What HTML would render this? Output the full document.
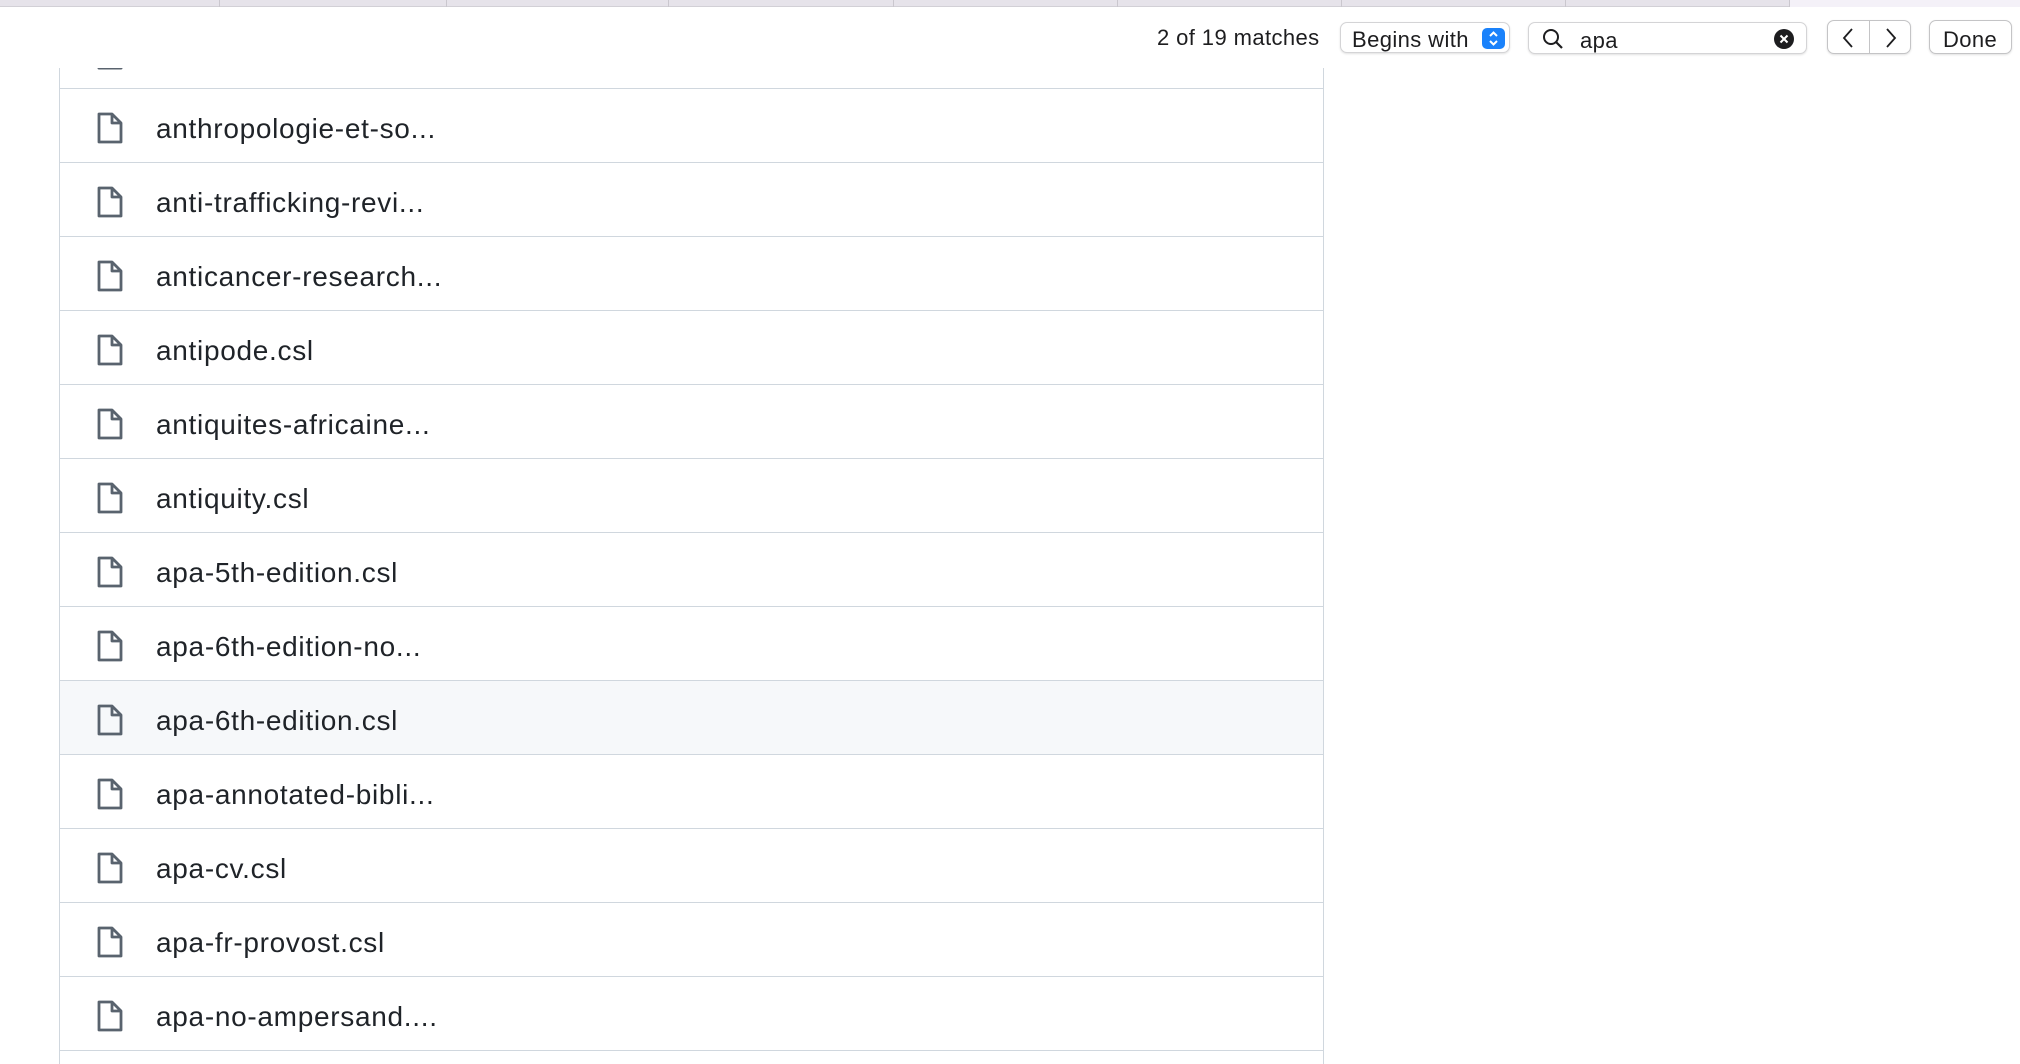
<!DOCTYPE html>
<html><head><style>
*{margin:0;padding:0;box-sizing:border-box}
body{width:2020px;height:1064px;overflow:hidden;background:#fff;font-family:"Liberation Sans",Helvetica,Arial,sans-serif;position:relative}
.tabs{position:absolute;left:0;top:0;width:2020px;height:7px;background:#e6e3ea;border-bottom:1px solid #d2d0d6}
.tabs i{position:absolute;top:0;width:1px;height:7px;background:#cac7ce}
.hdr{position:absolute;left:0;top:7px;width:2020px;height:61px;background:#fff;z-index:5}
.list{position:absolute;left:59px;top:0;width:1265px;height:1064px;border-left:1px solid #d0d7de;border-right:1px solid #d0d7de}
.row{position:absolute;left:0;width:1263px;height:74px;border-bottom:1.5px solid #d0d7de}
.row.sel{background:#f6f8fa}
.row svg{position:absolute;left:34px;top:21px}
.row span{position:absolute;left:96px;top:3px;line-height:74px;font-size:28px;letter-spacing:0.7px;color:#1f2328}
.t{position:absolute;font-size:22px;letter-spacing:0.4px;color:#1d1d1f}
.box{position:absolute;background:#fff;border:1px solid #d4d4d6;border-radius:7px;box-shadow:0 1px 2px rgba(0,0,0,.12)}
</style></head><body>
<div class="list">
<div class="row" style="top:15px"><svg width="32" height="36" viewBox="0 0 32 36"><path d="M5 4h13l9 9v19H5z" fill="none" stroke="#59636e" stroke-width="3" stroke-linejoin="round"/></svg></div>
</div>
<div class="tabs"><i style="left:219px"></i><i style="left:446px"></i><i style="left:668px"></i><i style="left:893px"></i><i style="left:1117px"></i><i style="left:1341px"></i><i style="left:1565px"></i><i style="left:1789px;width:231px;background:#f4f1f8;border-left:1px solid #cac7ce"></i></div>
<div class="hdr">
<div class="t" style="left:1157px;top:18px">2 of 19 matches</div>
<div class="box" style="left:1340px;top:15px;width:170px;height:31px"><span class="t" style="left:11px;top:4px">Begins with</span>
<div style="position:absolute;left:141px;top:5px;width:23px;height:21px;background:#1a82fb;border-radius:5px"><svg width="23" height="21" viewBox="0 0 23 21"><path d="M8 8l3.5-3.5L15 8M8 13l3.5 3.5L15 13" fill="none" stroke="#fff" stroke-width="2"/></svg></div></div>
<div class="box" style="left:1528px;top:15px;width:279px;height:32px">
<svg style="position:absolute;left:13px;top:5px" width="22" height="22" viewBox="0 0 22 22"><circle cx="9" cy="9" r="7" fill="none" stroke="#1d1d1f" stroke-width="2"/><path d="M14 14l6 6" stroke="#1d1d1f" stroke-width="2.2"/></svg>
<span class="t" style="left:51px;top:5px">apa</span>
<svg style="position:absolute;left:245px;top:6px" width="20" height="20" viewBox="0 0 20 20"><circle cx="10" cy="10" r="10" fill="#1d1d1f"/><path d="M6.5 6.5l7 7M13.5 6.5l-7 7" stroke="#fff" stroke-width="2"/></svg></div>
<div class="box" style="left:1827px;top:13px;width:84px;height:34px;border-color:#c4c4c6">
<div style="position:absolute;left:41px;top:0;width:1px;height:32px;background:#c4c4c6"></div>
<svg style="position:absolute;left:13px;top:6px" width="14" height="22" viewBox="0 0 14 22"><path d="M11 2L3 11l8 9" fill="none" stroke="#1d1d1f" stroke-width="1.8"/></svg>
<svg style="position:absolute;left:56px;top:6px" width="14" height="22" viewBox="0 0 14 22"><path d="M3 2l8 9-8 9" fill="none" stroke="#1d1d1f" stroke-width="1.8"/></svg></div>
<div class="box" style="left:1929px;top:13px;width:83px;height:34px;border-color:#c4c4c6"><span class="t" style="left:13px;top:6px">Done</span></div>
</div>
<div class="list" style="background:transparent;border:none;left:60px;width:1263px">
<div class="row" style="top:89px"><svg width="32" height="36" viewBox="0 0 32 36"><path d="M5 4h13l9 9v19H5zM18 4v9h9" fill="none" stroke="#59636e" stroke-width="2.8" stroke-linejoin="round"/></svg><span>anthropologie-et-so...</span></div>
<div class="row" style="top:163px"><svg width="32" height="36" viewBox="0 0 32 36"><path d="M5 4h13l9 9v19H5zM18 4v9h9" fill="none" stroke="#59636e" stroke-width="2.8" stroke-linejoin="round"/></svg><span>anti-trafficking-revi...</span></div>
<div class="row" style="top:237px"><svg width="32" height="36" viewBox="0 0 32 36"><path d="M5 4h13l9 9v19H5zM18 4v9h9" fill="none" stroke="#59636e" stroke-width="2.8" stroke-linejoin="round"/></svg><span>anticancer-research...</span></div>
<div class="row" style="top:311px"><svg width="32" height="36" viewBox="0 0 32 36"><path d="M5 4h13l9 9v19H5zM18 4v9h9" fill="none" stroke="#59636e" stroke-width="2.8" stroke-linejoin="round"/></svg><span>antipode.csl</span></div>
<div class="row" style="top:385px"><svg width="32" height="36" viewBox="0 0 32 36"><path d="M5 4h13l9 9v19H5zM18 4v9h9" fill="none" stroke="#59636e" stroke-width="2.8" stroke-linejoin="round"/></svg><span>antiquites-africaine...</span></div>
<div class="row" style="top:459px"><svg width="32" height="36" viewBox="0 0 32 36"><path d="M5 4h13l9 9v19H5zM18 4v9h9" fill="none" stroke="#59636e" stroke-width="2.8" stroke-linejoin="round"/></svg><span>antiquity.csl</span></div>
<div class="row" style="top:533px"><svg width="32" height="36" viewBox="0 0 32 36"><path d="M5 4h13l9 9v19H5zM18 4v9h9" fill="none" stroke="#59636e" stroke-width="2.8" stroke-linejoin="round"/></svg><span>apa-5th-edition.csl</span></div>
<div class="row" style="top:607px"><svg width="32" height="36" viewBox="0 0 32 36"><path d="M5 4h13l9 9v19H5zM18 4v9h9" fill="none" stroke="#59636e" stroke-width="2.8" stroke-linejoin="round"/></svg><span>apa-6th-edition-no...</span></div>
<div class="row sel" style="top:681px"><svg width="32" height="36" viewBox="0 0 32 36"><path d="M5 4h13l9 9v19H5zM18 4v9h9" fill="none" stroke="#59636e" stroke-width="2.8" stroke-linejoin="round"/></svg><span>apa-6th-edition.csl</span></div>
<div class="row" style="top:755px"><svg width="32" height="36" viewBox="0 0 32 36"><path d="M5 4h13l9 9v19H5zM18 4v9h9" fill="none" stroke="#59636e" stroke-width="2.8" stroke-linejoin="round"/></svg><span>apa-annotated-bibli...</span></div>
<div class="row" style="top:829px"><svg width="32" height="36" viewBox="0 0 32 36"><path d="M5 4h13l9 9v19H5zM18 4v9h9" fill="none" stroke="#59636e" stroke-width="2.8" stroke-linejoin="round"/></svg><span>apa-cv.csl</span></div>
<div class="row" style="top:903px"><svg width="32" height="36" viewBox="0 0 32 36"><path d="M5 4h13l9 9v19H5zM18 4v9h9" fill="none" stroke="#59636e" stroke-width="2.8" stroke-linejoin="round"/></svg><span>apa-fr-provost.csl</span></div>
<div class="row" style="top:977px"><svg width="32" height="36" viewBox="0 0 32 36"><path d="M5 4h13l9 9v19H5zM18 4v9h9" fill="none" stroke="#59636e" stroke-width="2.8" stroke-linejoin="round"/></svg><span>apa-no-ampersand....</span></div>
</div>
</body></html>
